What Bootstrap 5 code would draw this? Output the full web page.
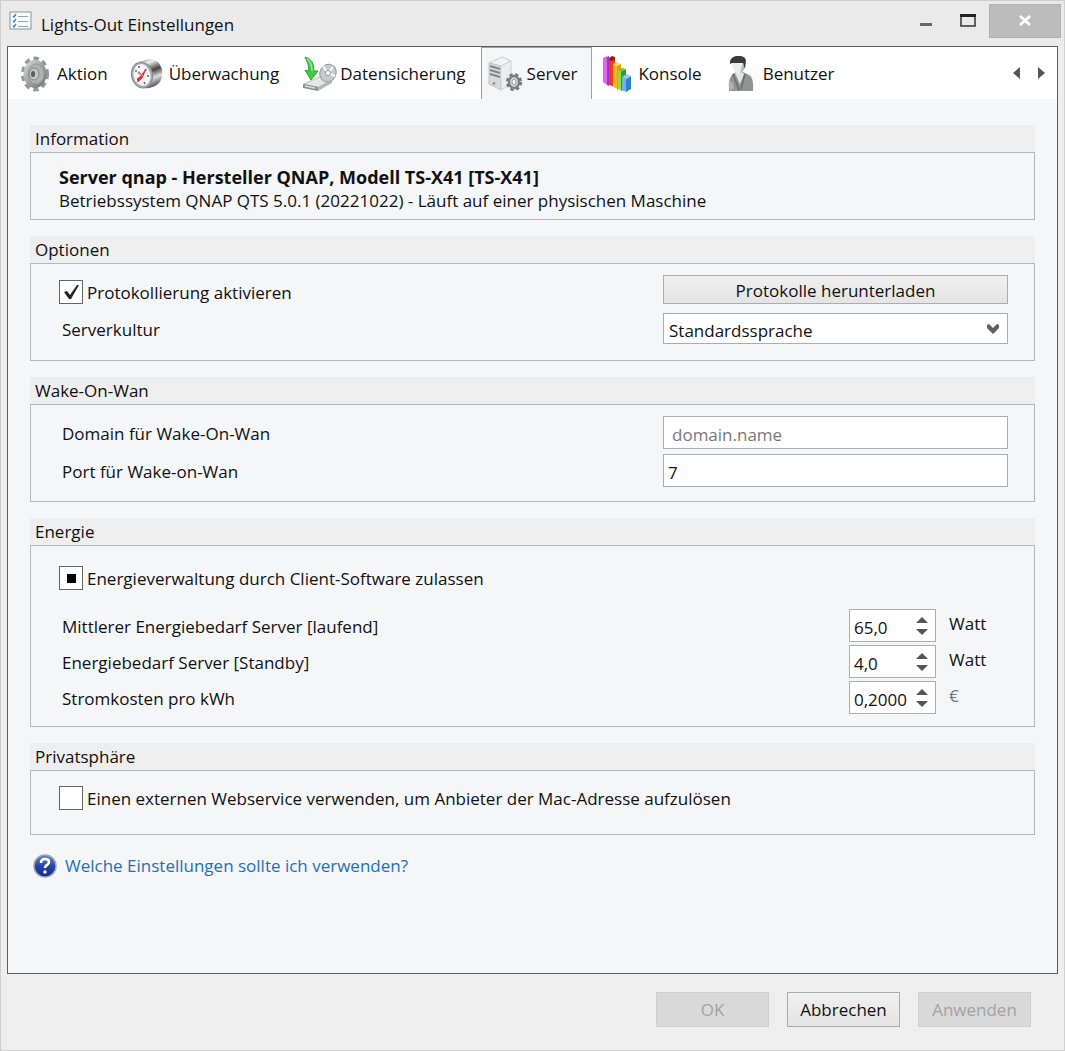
<!DOCTYPE html>
<html lang="de">
<head>
<meta charset="utf-8">
<meta name="viewport" content="width=device-width, initial-scale=1">
<title>Lights-Out Einstellungen</title>
<link href="https://cdn.jsdelivr.net/npm/bootstrap@5.3.0/dist/css/bootstrap.min.css" rel="stylesheet">
<style>
body{font-family:"Open Sans","Noto Sans",sans-serif;font-size:17px;line-height:24px;color:#111;background:#eee}
.app-window{min-height:100vh;border:1px solid #cfcfcf;padding:0 6px}
.titlebar{height:45px;background:#eaeaea;margin:0 -6px;padding-left:8px}
.win-buttons{padding:3px 3px 0 0}
.win-btn{border:0;background:none;padding:0;height:34px;width:42px;display:flex;align-items:center;justify-content:center}
.win-close{width:72px;background:#bcbcbc;border:1px solid #b2b2b2}
.frame{border:1px solid #5c5f62;background:#f4f6f8}
.tabbar{background:#fff;height:52px;padding-left:3px}
.nav-tabs.tab-list{border:0;height:52px}
.tab-list .nav-link{border:1px solid transparent;border-bottom:0;border-radius:0;margin:0;height:52px;padding:0 14px 0 6px;color:#111;display:flex;align-items:center;gap:3px}
.tab-list .nav-link.active{background:#f4f6f8;border-color:#7ba7d7;color:#111}
.tab-list svg{width:36px;height:36px;flex:none}
.arrow-btn{border:0;background:none;padding:0;width:24px;height:24px;display:flex;align-items:center;justify-content:center}
.pane{padding:26px 22px 24px}
.group{margin:0 0 16px}
.group-title{background:#eee;height:27px;line-height:28px;padding-left:5px;margin:0;font-size:17px}
.group-box{border:1px solid #b4b8bc;padding:11px 26px 16px 28px}
.info-box{padding-top:12px;padding-bottom:6px}
.info-head{font-size:18px}
.options-box{display:flex;flex-direction:column;gap:9px}
.wan-box{display:flex;flex-direction:column;gap:5px;padding-bottom:14px}
.energy-box{padding-top:20px;padding-bottom:12px}
.energy-lines{margin-top:19px;gap:3px}
.privacy-box{padding-top:15px;padding-bottom:24px}
.form-line{display:flex;align-items:center}
.form-line>label{padding:2px 0 0 3px}
.tick-line{display:flex;height:24px;line-height:26px}
.tick{appearance:none;width:24px;height:24px;border:1px solid #666;background:#fff center/22px no-repeat;margin:0 4px 0 0;flex:none}
.tick:checked{background-image:url("data:image/svg+xml,%3Csvg xmlns='http://www.w3.org/2000/svg' viewBox='0 0 22 22'%3E%3Cpath d='M4 11l3-1 3 4 7-10h2L11 18H9z' fill='%23222'/%3E%3C/svg%3E")}
.tick:indeterminate{background-image:linear-gradient(#000,#000);background-size:9px 9px}
.wide-field{width:345px;flex:none;border:1px solid #abadb0;border-radius:0;background-color:#fff;color:#111}
.btn.flat{border-radius:0;border:1px solid #acacac;background:linear-gradient(#f0f0f0,#e4e4e4);color:#111;font-size:17px;line-height:24px;padding:0}
.btn.flat.wide-field{height:29px;padding-top:2px}
.btn.flat:disabled{background:#d9d9d9;border-color:#cfcfcf;color:#a3a3a3;opacity:1}
.wide-field.text-field{height:33px;padding:4px 4px 0}
.text-field::placeholder{color:#777;padding-left:4px;opacity:1}
.wide-field.pick{height:31px;padding:4px 30px 0 5px;background-image:url("data:image/svg+xml,%3Csvg xmlns='http://www.w3.org/2000/svg' viewBox='0 0 12 10'%3E%3Cpath d='M0 1l2-1 4 4 4-4 2 1v3L6 10 0 4z' fill='%23606060'/%3E%3C/svg%3E");background-size:12px 10px;background-position:right 8px center;background-repeat:no-repeat;appearance:none}
.spin{width:87px;height:33px;border:1px solid #abadb0;background:#fff;display:flex;flex:none}
.spin input{border:0;background:none;width:60px;padding:4px 0 0 4px;color:#111}
.spin button{border:0;background:none;padding:0;height:12px;width:24px;display:flex;justify-content:center;align-items:center}
.unit{width:72px;padding:0 0 4px 13px;flex:none}
.help-line{height:30px}
.help-link{color:#1d6fb8;text-decoration:none}
.footer-bar{padding:18px 27px 23px;gap:18px}
.btn.flat.foot{width:113px;height:35px}
</style>
</head>
<body>
<div class="app-window d-flex flex-column">
<header class="titlebar d-flex align-items-start">
  <svg class="mt-2 flex-shrink-0" width="24" height="24" viewBox="0 0 24 24"><rect x="1" y="3" width="21" height="17" fill="#f8fafb" stroke="#8a929a"/><path d="M4 7l1 1 2-3M4 12l1 1 2-3M4 17l1 1 2-3" fill="none" stroke="#2e86c9" stroke-width="1.4"/><path d="M9 7.500h10M9 12.500h10M9 17.500h10" stroke="#9aa3ab"/></svg>
  <div class="ms-2 mt-2 pt-1 flex-grow-1">Lights-Out Einstellungen</div>
  <div class="win-buttons d-flex">
    <button class="win-btn" aria-label="Minimieren"><svg width="14" height="14"><path d="M1 10.500h12" stroke="#666" stroke-width="3"/></svg></button>
    <button class="win-btn" aria-label="Maximieren"><svg width="16" height="14"><path d="M1 1h14v11H1z" fill="none" stroke="#333" stroke-width="1.500"/><path d="M0 1.500h16" stroke="#222" stroke-width="3"/></svg></button>
    <button class="win-btn win-close" aria-label="Schließen"><svg width="14" height="14"><path d="M2 2l10 9M12 2L2 11" stroke="#fff" stroke-width="2.500"/></svg></button>
  </div>
</header>
<main class="frame flex-grow-1">
  <div class="tabbar d-flex justify-content-between align-items-center">
    <ul class="nav nav-tabs tab-list flex-nowrap">
      <li class="nav-item"><a class="nav-link" href="#"><svg viewBox="0 0 36 36"><defs><linearGradient id="steel" x1="0" x2="1" y2="1"><stop stop-color="#dcdedd"/><stop offset=".5" stop-color="#9fa4a3"/><stop offset="1" stop-color="#6a6f6e"/></linearGradient></defs><ellipse cx="17" cy="18" rx="11.500" ry="15" fill="none" stroke="#949998" stroke-width="5" stroke-dasharray="5 3.700"/><ellipse cx="17" cy="18" rx="11.500" ry="14" fill="url(#steel)"/><ellipse cx="18" cy="18" rx="8" ry="10" fill="#aeb3b2" stroke="#989d9c"/><ellipse cx="16" cy="18" rx="5" ry="6" fill="#bfc4c3" stroke="#858a89"/><ellipse cx="15" cy="18" rx="2" ry="3" fill="#565b5b"/></svg><span>Aktion</span></a></li>
      <li class="nav-item"><a class="nav-link" href="#"><svg viewBox="0 0 36 36"><defs><linearGradient id="chrome" y2="1" x2=".3"><stop stop-color="#888"/><stop offset=".2" stop-color="#f2f2f2"/><stop offset=".5" stop-color="#444"/><stop offset=".75" stop-color="#ddd"/><stop offset="1" stop-color="#666"/></linearGradient></defs><path d="M10 6Q22 0 29 7Q35 16 30 26Q24 33 14 32z" fill="url(#chrome)"/><ellipse cx="12" cy="19" rx="10.500" ry="13" transform="rotate(-12 12 19)" fill="#a5a9ad" stroke="#8a8e92"/><ellipse cx="12" cy="19" rx="8.500" ry="11" transform="rotate(-12 12 19)" fill="#f4f4f5"/><path d="M5 15h2M9 10v2M16 13l-1 2M19 20h-2M8 26v-2M15 28l-1-2" stroke="#667" stroke-width="1.500"/><path d="M7 23l3-2 6-8-4 9-3 3z" fill="#df3038" stroke="#df3038"/><path d="M8 16l5 4" stroke="#e76a70" stroke-width="2"/></svg><span>Überwachung</span></a></li>
      <li class="nav-item"><a class="nav-link" href="#"><svg viewBox="0 0 36 36"><path d="M3 28l15-7 13 2-11 9z" fill="#e6e7e8" stroke="#bbb"/><path d="M2 28l15 3v4L2 32z" fill="#8d8e90"/><path d="M17 31l14-8v4l-14 8z" fill="#b5b6b8"/><path d="M4 30l10 2" stroke="#ddd" stroke-width="1.500"/><ellipse cx="27" cy="17" rx="8" ry="9" transform="rotate(25 27 17)" fill="#c8c9cb" stroke="#999"/><path d="M27 17l-5-7M27 17l5-6M27 17l7 3" stroke="#f7f7f7" stroke-width="2"/><circle cx="27" cy="17" r="2.500" fill="#fff" stroke="#999"/><path d="M4 1q9 2 9 14h4L10 24 4 14l4 1Q8 8 4 1z" fill="#42c842" stroke="#2fa93b"/><path d="M6 3q5 4 5 12" fill="none" stroke="#98ed8d" stroke-width="1.500"/></svg><span>Datensicherung</span></a></li>
      <li class="nav-item"><a class="nav-link active" aria-current="page" href="#"><svg viewBox="0 0 36 36"><path d="M1 7l13-6 9 4-10 5z" fill="#f4f4f4" stroke="#ccc"/><path d="M1 7l12 3v24L1 28z" fill="#d8d9da" stroke="#c4c4c4"/><path d="M13 10l10-5v23l-10 6z" fill="#ecedee" stroke="#d0d0d0"/><path d="M2 10l10 3M2 14l10 3M2 18l10 3" stroke="#858585" stroke-width="2"/><path d="M5 27l2 1" stroke="#5494bd" stroke-width="2"/><ellipse cx="26" cy="26" rx="6" ry="7" fill="none" stroke="#737778" stroke-width="4" stroke-dasharray="3 2.200"/><ellipse cx="26" cy="26" rx="5" ry="6" fill="#d9dbdc" stroke="#7c8081" stroke-width="2.500"/><ellipse cx="26" cy="26" rx="2" ry="3" fill="#f4f6f8" stroke="#999"/></svg><span>Server</span></a></li>
      <li class="nav-item"><a class="nav-link" href="#"><svg viewBox="0 0 36 36"><path d="M4 2l4-2v29l-4-3z" fill="#df65ed"/><path d="M8 1l2-1v30l-2-1z" fill="#9e36c1"/><path d="M10 2l6-1v30l-6-2z" fill="#f13c20"/><path d="M10 2l3-2 3 1v3l-5 1z" fill="#a6160d"/><path d="M14 8l5-1v26l-5-2z" fill="#ffb719"/><path d="M18 9l4-1v24l-4 2z" fill="#ec9d08"/><path d="M14 8l4-2 4 2-4 2z" fill="#ffe05b"/><path d="M19 14l3 1v19l-3-1z" fill="#92dc46"/><path d="M22 15l5-2v20l-5 2z" fill="#309d2c"/><path d="M19 14l4-2 4 1-5 3z" fill="#6ccb49"/><path d="M23 21l4 2v13l-4-2z" fill="#6ab4ee"/><path d="M27 23l5-3v13l-5 3z" fill="#317dc8"/><path d="M23 21l5-3 4 2-5 3z" fill="#8cc9f4"/></svg><span>Konsole</span></a></li>
      <li class="nav-item"><a class="nav-link" href="#"><svg viewBox="0 0 36 36"><path d="M5 35q-1-15 5-18l7-2 8 4q5 2 4 16z" fill="#929493"/><path d="M11 17l6-2 3 3-4 10z" fill="#e4e4e4"/><path d="M9 18l6 16M21 18l-4 15" stroke="#6c6e6d" stroke-width="1.500"/><path d="M8 6h12q2 9-4 12-6-1-8-8z" fill="#eceded"/><path d="M16 18q5-3 5-10l-3 1z" fill="#b8b8b8"/><path d="M6 8Q5 2 12 0q8-1 10 4l-1 9-2-6H8z" fill="#383a3b"/><path d="M5 24q4 1 5 8l-4 3q-2-5-1-11z" fill="#b0b1b1"/></svg><span>Benutzer</span></a></li>
    </ul>
    <div class="d-flex pe-1">
      <button class="arrow-btn" aria-label="Zurück"><svg width="8" height="12"><path d="M7 0v12L0 6z" fill="#555"/></svg></button>
      <button class="arrow-btn" aria-label="Weiter"><svg width="8" height="12"><path d="M1 0v12l7-6z" fill="#555"/></svg></button>
    </div>
  </div>
  <form class="pane" onsubmit="return false">
    <section class="group"><h2 class="group-title">Information</h2>
      <div class="group-box info-box"><div class="info-head fw-bold">Server qnap - Hersteller QNAP, Modell TS-X41 [TS-X41]</div><div>Betriebssystem QNAP QTS 5.0.1 (20221022) - Läuft auf einer physischen Maschine</div></div>
    </section>
    <section class="group"><h2 class="group-title">Optionen</h2>
      <div class="group-box options-box">
        <div class="form-line justify-content-between align-items-end"><div class="tick-line"><input class="tick" type="checkbox" id="log" checked><label for="log">Protokollierung aktivieren</label></div><button type="button" class="btn flat wide-field">Protokolle herunterladen</button></div>
        <div class="form-line justify-content-between"><label for="culture">Serverkultur</label><select class="wide-field pick" id="culture"><option>Standardssprache</option></select></div>
      </div>
    </section>
    <section class="group"><h2 class="group-title">Wake-On-Wan</h2>
      <div class="group-box wan-box">
        <div class="form-line justify-content-between"><label for="domain">Domain für Wake-On-Wan</label><input class="wide-field text-field" id="domain" type="text" placeholder="domain.name"></div>
        <div class="form-line justify-content-between"><label for="port">Port für Wake-on-Wan</label><input class="wide-field text-field" id="port" type="text" value="7"></div>
      </div>
    </section>
    <section class="group"><h2 class="group-title">Energie</h2>
      <div class="group-box energy-box">
        <div class="tick-line"><input class="tick" type="checkbox" id="energy"><label for="energy">Energieverwaltung durch Client-Software zulassen</label></div>
        <div class="energy-lines d-flex flex-column">
        <div class="form-line"><label class="flex-grow-1" for="run">Mittlerer Energiebedarf Server [laufend]</label><div class="spin"><input id="run" type="text" value="65,0"><div class="d-flex flex-column justify-content-center"><button type="button" aria-label="Mehr"><svg width="12" height="6"><path d="M0 6L6 0l6 6z" fill="#555"/></svg></button><button type="button" aria-label="Weniger"><svg width="12" height="6"><path d="M0 0l6 6 6-6z" fill="#555"/></svg></button></div></div><span class="unit">Watt</span></div>
        <div class="form-line"><label class="flex-grow-1" for="standby">Energiebedarf Server [Standby]</label><div class="spin"><input id="standby" type="text" value="4,0"><div class="d-flex flex-column justify-content-center"><button type="button" aria-label="Mehr"><svg width="12" height="6"><path d="M0 6L6 0l6 6z" fill="#555"/></svg></button><button type="button" aria-label="Weniger"><svg width="12" height="6"><path d="M0 0l6 6 6-6z" fill="#555"/></svg></button></div></div><span class="unit">Watt</span></div>
        <div class="form-line"><label class="flex-grow-1" for="cost">Stromkosten pro kWh</label><div class="spin"><input id="cost" type="text" value="0,2000"><div class="d-flex flex-column justify-content-center"><button type="button" aria-label="Mehr"><svg width="12" height="6"><path d="M0 6L6 0l6 6z" fill="#555"/></svg></button><button type="button" aria-label="Weniger"><svg width="12" height="6"><path d="M0 0l6 6 6-6z" fill="#555"/></svg></button></div></div><span class="unit text-secondary">€</span></div>
        </div>
      </div>
    </section>
    <section class="group"><h2 class="group-title">Privatsphäre</h2>
      <div class="group-box privacy-box"><div class="tick-line"><input class="tick" type="checkbox" id="web"><label for="web">Einen externen Webservice verwenden, um Anbieter der Mac-Adresse aufzulösen</label></div></div>
    </section>
    <div class="help-line d-flex align-items-center gap-2">
      <svg class="flex-shrink-0" width="27" height="24" viewBox="-2 0 27 24"><defs><linearGradient id="ball" y2="1" x2="0"><stop stop-color="#6785cf"/><stop offset=".5" stop-color="#2446a5"/><stop offset="1" stop-color="#172b7e"/></linearGradient></defs><circle cx="13" cy="12" r="11" fill="url(#ball)" stroke="#9aa6bd" stroke-width="1.500"/><path d="M9 9q0-4 4-4t4 3q0 2-2 3-2 1-2 3" fill="none" stroke="#fff" stroke-width="2.600"/><circle cx="13" cy="18" r="1.700" fill="#fff"/></svg>
      <a class="help-link" href="#">Welche Einstellungen sollte ich verwenden?</a>
    </div>
  </form>
</main>
<footer class="footer-bar d-flex justify-content-end">
  <button class="btn flat foot" disabled>OK</button>
  <button class="btn flat foot">Abbrechen</button>
  <button class="btn flat foot" disabled>Anwenden</button>
</footer>
</div>
<script src="https://cdn.jsdelivr.net/npm/bootstrap@5.3.0/dist/js/bootstrap.bundle.min.js"></script>
<script>document.getElementById('energy').indeterminate = true;</script>
</body>
</html>
